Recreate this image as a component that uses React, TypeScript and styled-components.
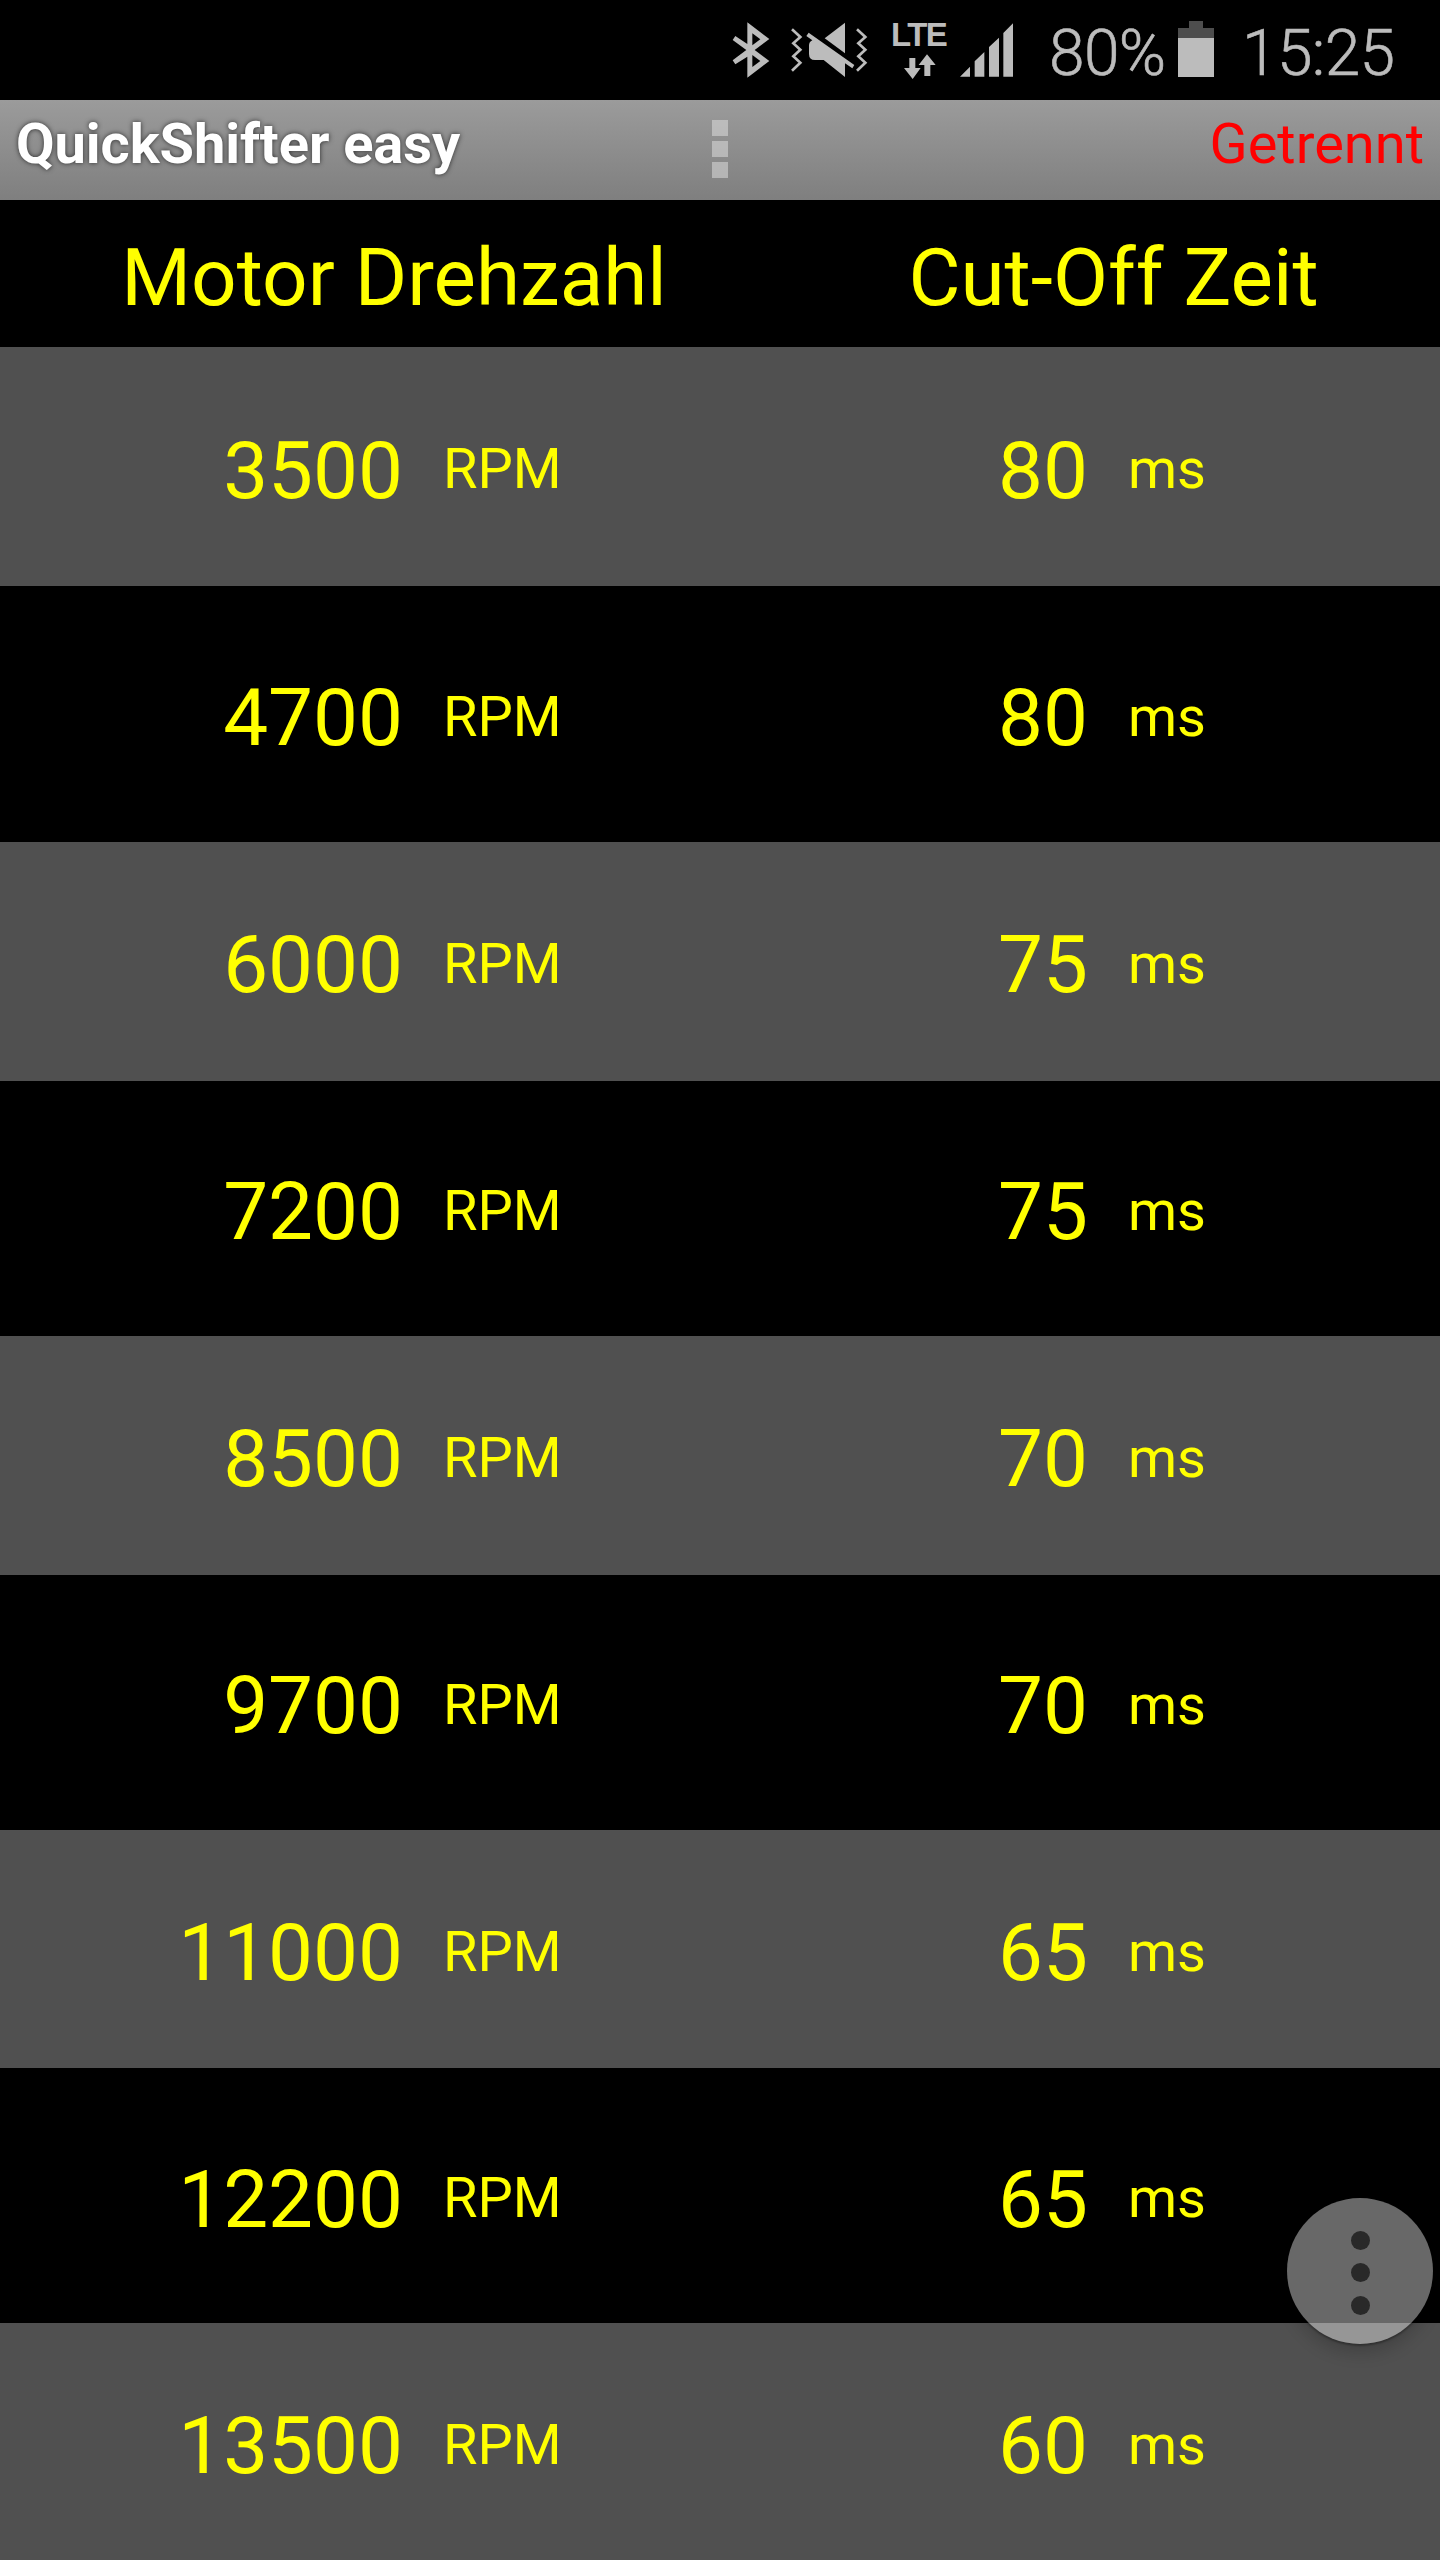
import React from "react";
import styled, { createGlobalStyle } from "styled-components";

const GlobalStyle = createGlobalStyle`
  html, body { margin: 0; padding: 0; background: #000; }
  body { font-family: Roboto, "Liberation Sans", sans-serif; }
`;

const Screen = styled.main`
  position: relative;
  width: 1440px;
  height: 2560px;
  overflow: hidden;
  display: flex;
  flex-direction: column;
  background: #000;
  color: #ff0;
`;

const StatusBar = styled.header`
  flex: none;
  height: 100px;
  display: flex;
  align-items: flex-start;
  padding-left: 730px;
  color: #bcbcbc;
`;

const StatusIcon = styled.svg<{ $gap?: number }>`
  flex: none;
  display: block;
  margin: 20px 0 0 ${(p) => p.$gap ?? 0}px;
  fill: #bcbcbc;
`;

const Network = styled.div`
  flex: none;
  width: 69px;
  margin-left: 22px;
  display: flex;
  flex-direction: column;
`;

const NetworkType = styled.span`
  height: 54px;
  padding-left: 1px;
  font-family: "Liberation Sans", sans-serif;
  font-size: 33px;
  font-weight: 700;
  letter-spacing: -1.5px;
  line-height: 70px;
`;

const NetworkArrows = styled.svg`
  display: block;
  margin-left: 14px;
  fill: #bcbcbc;
`;

const StatusText = styled.span<{ $width: number; $gap: number }>`
  flex: none;
  width: ${(p) => p.$width}px;
  margin-left: ${(p) => p.$gap}px;
  font-size: 64px;
  font-weight: 300;
  letter-spacing: -0.6px;
  line-height: 107px;
  white-space: nowrap;
  -webkit-text-stroke: 0.6px #bcbcbc;
`;

const Battery = styled.div`
  flex: none;
  width: 36px;
  margin-top: 21px;
  display: flex;
  flex-direction: column;
  align-items: center;
`;

const BatteryCap = styled.div`
  width: 14px;
  height: 7px;
  background: #4d4d4d;
`;

const BatteryBody = styled.div`
  box-sizing: border-box;
  width: 36px;
  height: 49px;
  border-top: 10px solid #4d4d4d;
  background: #bcbcbc;
`;

const TitleBar = styled.div`
  flex: none;
  box-sizing: border-box;
  height: 100px;
  display: grid;
  grid-template-columns: 1fr 16px 1fr;
  padding: 0 16px;
  background: linear-gradient(#9b9b9b, #7f7f7f);
  font-size: 56px;
  line-height: 88px;
`;

const Title = styled.h1`
  margin: 0;
  font-size: 56px;
  font-weight: 700;
  letter-spacing: -0.08px;
  color: #fff;
  text-shadow: 0 0 5px rgba(0, 0, 0, 0.7);
  white-space: nowrap;
`;

const OverflowMenu = styled.div`
  display: flex;
  flex-direction: column;
  gap: 5px;
  padding-top: 20px;
`;

const OverflowSquare = styled.span`
  width: 16px;
  height: 16px;
  background: rgba(224, 224, 224, 0.52);
`;

const Connection = styled.span`
  justify-self: end;
  color: #f00;
`;

const TableHead = styled.div`
  flex: none;
  height: 147px;
  display: flex;
  font-size: 80px;
  line-height: 156px;
  text-align: center;
  white-space: nowrap;
`;

const HeadCell = styled.div<{ $width: number }>`
  width: ${(p) => p.$width}px;
`;

const Table = styled.div`
  display: flex;
  flex-direction: column;
  gap: 8px;
`;

const Value = styled.span`
  font-size: 80px;
  line-height: 246px;
  text-align: right;
`;

const Unit = styled.span`
  padding-left: 40px;
  font-size: 56px;
  line-height: 244px;
`;

const Row = styled.div`
  flex: none;
  height: 239px;
  display: grid;
  grid-template-columns: 403px 285px 400px 352px;
  background: #000;

  &:nth-child(odd) {
    background: #505050;
  }

  &:first-child {
    margin-bottom: 1px;
  }

  &:first-child ${Value}, &:nth-child(8) ${Value} {
    line-height: 248px;
  }

  &:nth-child(7) {
    height: 238px;
  }
`;

const FloatingButton = styled.button`
  position: absolute;
  left: 1287px;
  top: 2198px;
  width: 146px;
  height: 146px;
  padding: 3px 0 0;
  border: 0;
  border-radius: 50%;
  display: flex;
  flex-direction: column;
  align-items: center;
  justify-content: center;
  gap: 13.5px;
  background: rgba(245, 245, 245, 0.425);
  box-shadow: 0 2px 2px rgba(0, 0, 0, 0.3), 0 10px 16px rgba(0, 0, 0, 0.16);
`;

const Dot = styled.span`
  width: 19px;
  height: 19px;
  border-radius: 50%;
  background: #292929;
`;

const ROWS: [number, number][] = [
  [3500, 80],
  [4700, 80],
  [6000, 75],
  [7200, 75],
  [8500, 70],
  [9700, 70],
  [11000, 65],
  [12200, 65],
  [13500, 60],
];

const BluetoothIcon = () => (
  <StatusIcon width="40" height="60" viewBox="60 60 120 180">
    <path
      fillRule="evenodd"
      d="M112 67L178 117L134 150L178 183L112 233V170L76 193L68 181L109 150L68 120L76 108L112 132ZM127 100V136L151 118ZM127 165V201L151 183Z"
    />
  </StatusIcon>
);

const VibrateMuteIcon = () => (
  <StatusIcon width="78" height="60" viewBox="240 60 234 180" $gap={20}>
    <path
      d="M246 88L271 111L250 130L271 149L250 169L271 188L246 212M441 88L466 111L445 130L466 149L445 169L466 188L441 212"
      fill="none"
      stroke="#bcbcbc"
      strokeWidth="8"
    />
    <path d="M405 68V160L344 115Z" />
    <path d="M296 98L433 195L427 205L405 190V231L341 180H315Q297 180 297 162V136Q297 126 307 121L289 108Z" />
  </StatusIcon>
);

const SignalIcon = () => (
  <StatusIcon width="55" height="60" viewBox="747 60 165 180">
    <path d="M750 230L780 200V230ZM794 230V184L823 156V230ZM837 230V141L867 113V230ZM880 230V99L909 70V230Z" />
  </StatusIcon>
);

export default function App() {
  return (
    <>
      <GlobalStyle />
      <Screen>
        <StatusBar>
          <BluetoothIcon />
          <VibrateMuteIcon />
          <Network>
            <NetworkType>LTE</NetworkType>
            <NetworkArrows width="32" height="25" viewBox="587 162 96 75">
              <path d="M603 174H621V204H637L613 237L587 204H603ZM656 163L682 195H666V228H648V195H631Z" />
            </NetworkArrows>
          </Network>
          <SignalIcon />
          <StatusText $width={129} $gap={35}>80%</StatusText>
          <Battery>
            <BatteryCap />
            <BatteryBody />
          </Battery>
          <StatusText $width={170} $gap={28}>15:25</StatusText>
        </StatusBar>
        <TitleBar>
          <Title>QuickShifter easy</Title>
          <OverflowMenu>
            <OverflowSquare />
            <OverflowSquare />
            <OverflowSquare />
          </OverflowMenu>
          <Connection>Getrennt</Connection>
        </TitleBar>
        <TableHead>
          <HeadCell $width={788}>Motor Drehzahl</HeadCell>
          <HeadCell $width={651}>Cut-Off Zeit</HeadCell>
        </TableHead>
        <Table>
          {ROWS.map(([rpm, ms]) => (
            <Row key={rpm}>
              <Value>{rpm}</Value>
              <Unit>RPM</Unit>
              <Value>{ms}</Value>
              <Unit>ms</Unit>
            </Row>
          ))}
        </Table>
        <FloatingButton aria-label="Menu">
          <Dot />
          <Dot />
          <Dot />
        </FloatingButton>
      </Screen>
    </>
  );
}
